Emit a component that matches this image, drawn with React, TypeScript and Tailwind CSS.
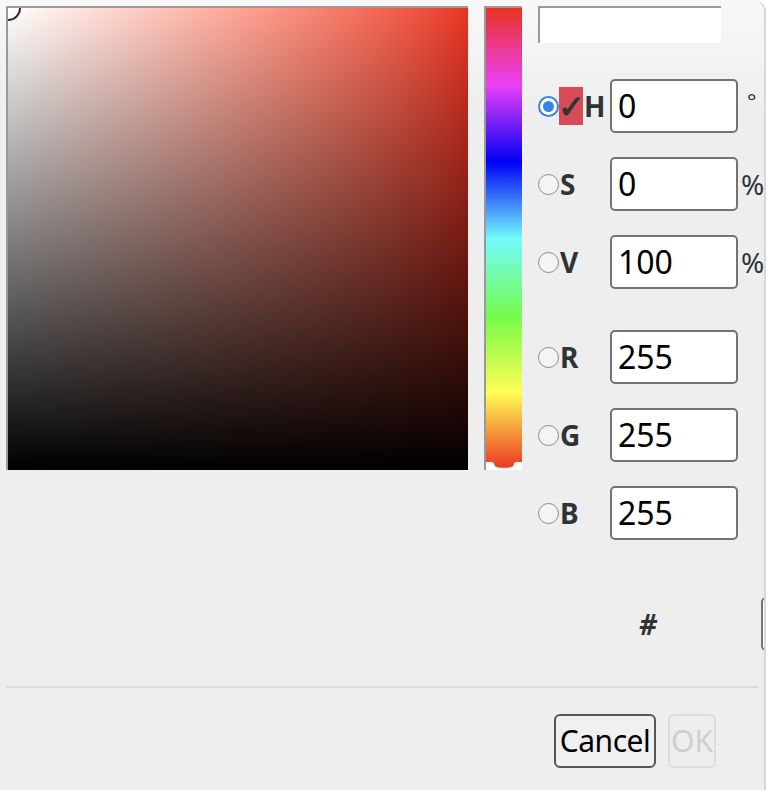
import React from "react";

const font = { fontFamily: '"Noto Sans", "Open Sans", sans-serif' };

function Radio({ checked }: { checked?: boolean }) {
  if (checked) {
    return (
      <span className="w-[21px] h-[21px] rounded-full border-2 border-[#3584e4] bg-white flex items-center justify-center shrink-0">
        <span className="w-[11px] h-[11px] rounded-full bg-[#3584e4]" />
      </span>
    );
  }
  return <span className="w-[21px] h-[21px] rounded-full border-[1.5px] border-[#8a8a8a] bg-[#f4f4f4] shrink-0" />;
}

function Field({ value }: { value: string }) {
  return (
    <div className="w-[128px] h-[54px] shrink-0 rounded-[5px] border-2 border-[#737373] bg-white flex items-center pl-[6px] text-[32px] text-black leading-none">
      {value}
    </div>
  );
}

function Row({
  label,
  value,
  unit,
  checked,
  className,
}: {
  label: string;
  value: string;
  unit?: string;
  checked?: boolean;
  className?: string;
}) {
  return (
    <div className={`flex items-center h-[54px] ${className ?? ""}`}>
      <div className="w-[72px] shrink-0 flex items-center">
        <Radio checked={checked} />
        {checked && (
          <span className="w-[24px] h-[38px] bg-[#d94a59] flex items-center justify-center text-[32px] font-bold text-[#2e3436] leading-none">
            ✓
          </span>
        )}
        <span className="text-[28px] font-bold text-[#2e3436] leading-none ml-[1px]">{label}</span>
      </div>
      <Field value={value} />
      {unit && (
        <span
          className={`text-[#2e3436] leading-none ${
            unit === "°" ? "text-[22px] self-start mt-[10px] ml-[9px]" : "text-[28px] ml-[3px]"
          }`}
        >
          {unit}
        </span>
      )}
    </div>
  );
}

export default function App() {
  return (
    <div className="w-[768px] h-[790px] bg-white overflow-hidden" style={font}>
      <div className="w-[766px] h-[790px] overflow-hidden rounded-tr-[12px] border-r-2 border-[#d9d9d9] bg-gradient-to-b from-[#f8f8f8] from-0% to-[#eeeeee] to-[14%] flex flex-col">
        <div className="flex pt-[6px] pl-[6px] h-[686px] shrink-0">
          {/* saturation / value square */}
          <div className="w-[462px] h-[464px] shrink-0 border-l-2 border-t-2 border-[#9a9a9a] relative overflow-hidden">
            <div className="absolute inset-0 bg-gradient-to-r from-white to-[#ea3323]" />
            <div className="absolute inset-0 bg-gradient-to-b from-transparent to-black" />
            <div className="absolute -left-[13px] -top-[13px] w-[26px] h-[26px] rounded-full border-2 border-[#2a2a2a] shadow-[inset_0_0_0_1px_white]" />
          </div>

          {/* hue bar */}
          <div className="ml-[16px] w-[38px] h-[464px] shrink-0 border-l-2 border-t-2 border-[#9a9a9a] relative overflow-hidden">
            <div className="absolute inset-0 bg-[linear-gradient(to_bottom,#ea3323_0%,#ea3ff7_16.7%,#0000f5_33.3%,#73fbfd_50%,#75fb4c_66.7%,#fffe54_83.3%,#ea3323_100%)]" />
            <svg className="absolute left-0 bottom-0" width="36" height="8" viewBox="0 0 36 8">
              <path d="M0 0 H6 Q8 0 8 2 Q8 6 18 6 Q28 6 28 2 Q28 0 30 0 H36 V8 H0 Z" fill="white" />
              <path d="M6 0 Q8 0 8 2 Q8 6 18 6 Q28 6 28 2 Q28 0 30 0" fill="none" stroke="#b0b0b0" strokeWidth="1" />
            </svg>
          </div>

          {/* controls */}
          <div className="ml-[16px] w-[300px] shrink-0 flex flex-col">
            <div className="w-[183px] h-[37px] bg-white border-l-2 border-t-2 border-[#9a9a9a]" />
            <Row label="H" value="0" unit="°" checked className="mt-[36px]" />
            <Row label="S" value="0" unit="%" className="mt-[24px]" />
            <Row label="V" value="100" unit="%" className="mt-[24px]" />
            <Row label="R" value="255" className="mt-[41px]" />
            <Row label="G" value="255" className="mt-[24px]" />
            <Row label="B" value="255" className="mt-[24px]" />
            <div className="flex items-center h-[54px] mt-[57px]">
              <span className="ml-[101px] text-[28px] font-bold italic text-[#2e3436] leading-none shrink-0">#</span>
              <div className="ml-[104px] w-[60px] h-[54px] rounded-[5px] border-2 border-[#737373] bg-white shrink-0" />
            </div>
          </div>
        </div>

        <div className="mx-[6px] h-[2px] bg-[#dcdcdc] shrink-0" />

        <div className="flex justify-end pr-[48px] pt-[26px] gap-[12px]">
          <div className="h-[54px] w-[102px] rounded-[6px] border-2 border-[#555555] bg-[#f0f0f0] flex items-center justify-center text-[30px] text-black leading-none tracking-[-0.5px]">
            Cancel
          </div>
          <div className="h-[54px] w-[48px] rounded-[6px] border-2 border-[#dddddd] flex items-center justify-center text-[30px] text-[#cfcfcf] leading-none">
            OK
          </div>
        </div>
      </div>
    </div>
  );
}
